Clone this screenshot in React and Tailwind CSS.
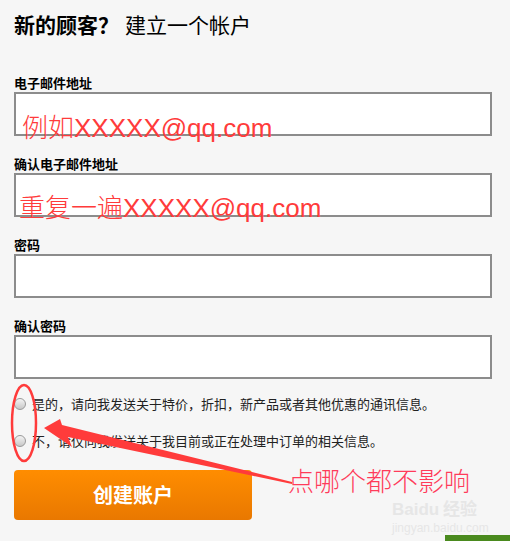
import React from "react";

const cjk = { fontFamily: '"Noto Sans CJK SC", "Liberation Sans", sans-serif' };
const latin = { fontFamily: '"Liberation Sans", sans-serif' };

function Field({ label }) {
  return (
    <div className="flex flex-col gap-[1px]">
      <label className="text-[13px] leading-[16px] font-bold text-black">{label}</label>
      <div className="h-[44px] w-[478px] border-2 border-[#8c8c8c] bg-white" />
    </div>
  );
}

function Radio({ text }) {
  return (
    <div className="flex items-center gap-[6px]">
      <span className="w-[12px] h-[12px] rounded-full border border-[#9a9a9a] bg-gradient-to-b from-[#f4f4f4] to-[#c8c8c8]" />
      <span className="text-[13px] leading-[16px] text-[#222]">{text}</span>
    </div>
  );
}

export default function App() {
  return (
    <div
      className="relative w-[510px] h-[541px] overflow-hidden bg-[#f6f6f6] px-[14px] pt-[12px] flex flex-col"
      style={cjk}
    >
      {/* heading */}
      <h2 className="text-[21px] leading-[24px] text-black flex gap-[6px]">
        <span className="font-bold">新的顾客？</span>
        <span>建立一个帐户</span>
      </h2>

      {/* form */}
      <div className="mt-[39px] flex flex-col gap-[20px]">
        <Field label="电子邮件地址" />
        <Field label="确认电子邮件地址" />
        <Field label="密码" />
        <Field label="确认密码" />
      </div>

      <div className="mt-[17px] flex flex-col gap-[21px]">
        <Radio text="是的，请向我发送关于特价，折扣，新产品或者其他优惠的通讯信息。" />
        <Radio text="不，请仅向我发送关于我目前或正在处理中订单的相关信息。" />
      </div>

      <button className="mt-[21px] w-[238px] h-[50px] rounded-[4px] bg-gradient-to-b from-[#ff8d00] to-[#e97800] text-white text-[20px] font-bold">
        创建账户
      </button>

      {/* red annotations */}
      <div className="absolute left-[22px] top-[111px] text-[26px] leading-[30px] text-[#ff3b3b] font-light whitespace-nowrap">
        例如<span style={latin}>XXXXX@qq.com</span>
      </div>
      <div className="absolute left-[19px] top-[191px] text-[26px] leading-[30px] text-[#ff3b3b] font-light whitespace-nowrap">
        重复一遍<span style={latin}>XXXXX@qq.com</span>
      </div>
      <div className="absolute left-[288px] top-[466px] text-[26px] leading-[28px] text-[#ff3b5a] font-light whitespace-nowrap">
        点哪个都不影响
      </div>

      <svg className="absolute left-0 top-0" width="510" height="541" viewBox="0 0 510 541">
        <ellipse cx="24" cy="423" rx="12" ry="38" fill="none" stroke="#ff3b3b" strokeWidth="2.5" />
        <polygon points="44,428 60,419 62,425 292,482 292,484 68,437 72,447" fill="#ff3b3b" />
      </svg>

      {/* watermark */}
      <div
        className="absolute left-[392px] top-[498px] flex flex-col text-[#e6e6e6] whitespace-nowrap"
        style={latin}
      >
        <span className="font-bold text-[17px] leading-[19px]">
          Baidu<span style={cjk}> 经验</span>
        </span>
        <span className="text-[12px] leading-[14px] mt-[2px]">jingyan.baidu.com</span>
      </div>

      {/* green bar */}
      <div className="absolute left-[445px] top-[535px] w-[65px] h-[6px] bg-[#4a8a1e]" />
    </div>
  );
}
